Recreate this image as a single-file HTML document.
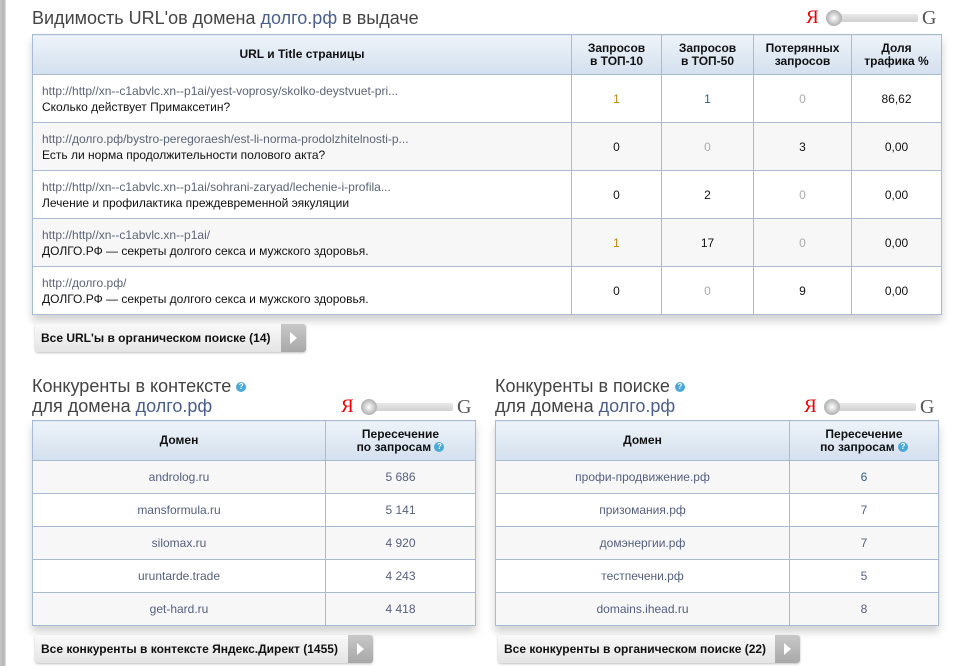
<!DOCTYPE html>
<html><head><meta charset="utf-8"><style>
*{margin:0;padding:0;box-sizing:border-box}
body{width:966px;height:666px;background:#fff;font-family:"Liberation Sans",Arial,sans-serif;position:relative;overflow:hidden}
.strip{position:absolute;left:0;top:0;width:6px;height:666px;background:linear-gradient(90deg,#c8c8c8,#b4b4b4 60%,#e0e0e0)}
h2{position:absolute;font-weight:normal;color:#444;font-size:18px;line-height:20px}
h2 a{color:#4a5f8c;text-decoration:none}
table{position:absolute;border-collapse:collapse;font-size:12px;box-shadow:0 6px 8px rgba(0,0,0,.18);background:#fff}
th{background:linear-gradient(#eef3f9,#d3e0ee);color:#111;font-weight:bold;font-size:12px;line-height:13px;border:1px solid #a8bbd3;text-align:center}
td{border:1px solid #a8bbd3;text-align:center;color:#111}
tr.g td{background:#f7f7f7}
.u{text-align:left;padding-left:9px;line-height:16px}
.u span{color:#5b6478}
.o{color:#b8860b}.b{color:#2a5f95}.z{color:#aaa}
.dm{color:#556080}
.btn{position:absolute;height:28px;background:linear-gradient(#fafafa,#e4e4e4);border-radius:3px;box-shadow:0 1px 2px rgba(0,0,0,.25);font-size:12px;font-weight:bold;line-height:28px;padding-left:6px;color:#111}
.btn i{position:absolute;right:0;top:0;width:25px;height:28px;background:linear-gradient(#c8c8c8,#a8a8a8);border-radius:0 3px 3px 0}
.btn i:after{content:"";position:absolute;left:9px;top:8px;border-left:7px solid #fff;border-top:6px solid transparent;border-bottom:6px solid transparent}
.sl{position:absolute;height:16px;width:140px}
.sl .y{position:absolute;left:0;top:-3px;color:#e00;font-size:19px;font-family:"Liberation Serif",serif}
.sl .tr{position:absolute;left:22px;top:4px;width:90px;height:8px;background:linear-gradient(#e8e8e8,#d0d0d0);border-radius:2px}
.sl .k{position:absolute;left:20px;top:0;width:16px;height:16px;border-radius:50%;background:radial-gradient(circle at 50% 50%,#fff,#bbb 60%,#999)}
.sl .gg{position:absolute;left:116px;top:-3px;color:#555;font-size:20px;font-family:"Liberation Serif",serif}
.q{display:inline-block;width:10px;height:10px;border-radius:50%;background:#4aa8d8;color:#fff;font-size:8px;line-height:10px;text-align:center;vertical-align:middle;font-weight:bold}
</style></head><body>
<div class="strip"></div>
<h2 style="left:32px;top:8px">Видимость URL'ов домена <a>долго.рф</a> в выдаче</h2>
<div class="sl" style="left:806px;top:10px"><span class="y">Я</span><div class="tr"></div><div class="k"></div><span class="gg">G</span></div>
<table style="left:32px;top:34px;width:910px">
<tr style="height:40px"><th style="width:539px">URL и Title страницы</th><th style="width:90px">Запросов<br>в ТОП-10</th><th style="width:92px">Запросов<br>в ТОП-50</th><th style="width:98px">Потерянных<br>запросов</th><th>Доля<br>трафика %</th></tr>
<tr style="height:48px"><td class="u"><span>http://http//xn--c1abvlc.xn--p1ai/yest-voprosy/skolko-deystvuet-pri...</span><br>Сколько действует Примаксетин?</td><td class="o">1</td><td class="b">1</td><td class="z">0</td><td>86,62</td></tr>
<tr style="height:48px" class="g"><td class="u"><span>http://долго.рф/bystro-peregoraesh/est-li-norma-prodolzhitelnosti-p...</span><br>Есть ли норма продолжительности полового акта?</td><td>0</td><td class="z">0</td><td>3</td><td>0,00</td></tr>
<tr style="height:48px"><td class="u"><span>http://http//xn--c1abvlc.xn--p1ai/sohrani-zaryad/lechenie-i-profila...</span><br>Лечение и профилактика преждевременной эякуляции</td><td>0</td><td>2</td><td class="z">0</td><td>0,00</td></tr>
<tr style="height:48px" class="g"><td class="u"><span>http://http//xn--c1abvlc.xn--p1ai/</span><br>ДОЛГО.РФ — секреты долгого секса и мужского здоровья.</td><td class="o">1</td><td>17</td><td class="z">0</td><td>0,00</td></tr>
<tr style="height:48px"><td class="u"><span>http://долго.рф/</span><br>ДОЛГО.РФ — секреты долгого секса и мужского здоровья.</td><td>0</td><td class="z">0</td><td>9</td><td>0,00</td></tr>
</table>
<div class="btn" style="left:35px;top:324px;width:271px">Все URL'ы в органическом поиске (14)<i></i></div>

<h2 style="left:32px;top:376px">Конкуренты в контексте <span class="q">?</span><br>для домена <a>долго.рф</a></h2>
<div class="sl" style="left:341px;top:399px"><span class="y">Я</span><div class="tr"></div><div class="k"></div><span class="gg">G</span></div>
<table style="left:32px;top:420px;width:444px">
<tr style="height:40px"><th style="width:293px">Домен</th><th>Пересечение<br>по запросам <span class="q">?</span></th></tr>
<tr style="height:33px" class="g"><td class="dm">androlog.ru</td><td class="dm">5 686</td></tr>
<tr style="height:33px"><td class="dm">mansformula.ru</td><td class="dm">5 141</td></tr>
<tr style="height:33px" class="g"><td class="dm">silomax.ru</td><td class="dm">4 920</td></tr>
<tr style="height:33px"><td class="dm">uruntarde.trade</td><td class="dm">4 243</td></tr>
<tr style="height:33px" class="g"><td class="dm">get-hard.ru</td><td class="dm">4 418</td></tr>
</table>
<div class="btn" style="left:35px;top:635px;width:338px">Все конкуренты в контексте Яндекс.Директ (1455)<i></i></div>

<h2 style="left:495px;top:376px">Конкуренты в поиске <span class="q">?</span><br>для домена <a>долго.рф</a></h2>
<div class="sl" style="left:804px;top:399px"><span class="y">Я</span><div class="tr"></div><div class="k"></div><span class="gg">G</span></div>
<table style="left:495px;top:420px;width:444px">
<tr style="height:40px"><th style="width:294px">Домен</th><th>Пересечение<br>по запросам <span class="q">?</span></th></tr>
<tr style="height:33px" class="g"><td class="dm">профи-продвижение.рф</td><td class="b">6</td></tr>
<tr style="height:33px"><td class="dm">призомания.рф</td><td class="dm">7</td></tr>
<tr style="height:33px" class="g"><td class="dm">домэнергии.рф</td><td class="dm">7</td></tr>
<tr style="height:33px"><td class="dm">тестпечени.рф</td><td class="dm">5</td></tr>
<tr style="height:33px" class="g"><td class="dm">domains.ihead.ru</td><td class="dm">8</td></tr>
</table>
<div class="btn" style="left:498px;top:635px;width:302px">Все конкуренты в органическом поиске (22)<i></i></div>
</body></html>
